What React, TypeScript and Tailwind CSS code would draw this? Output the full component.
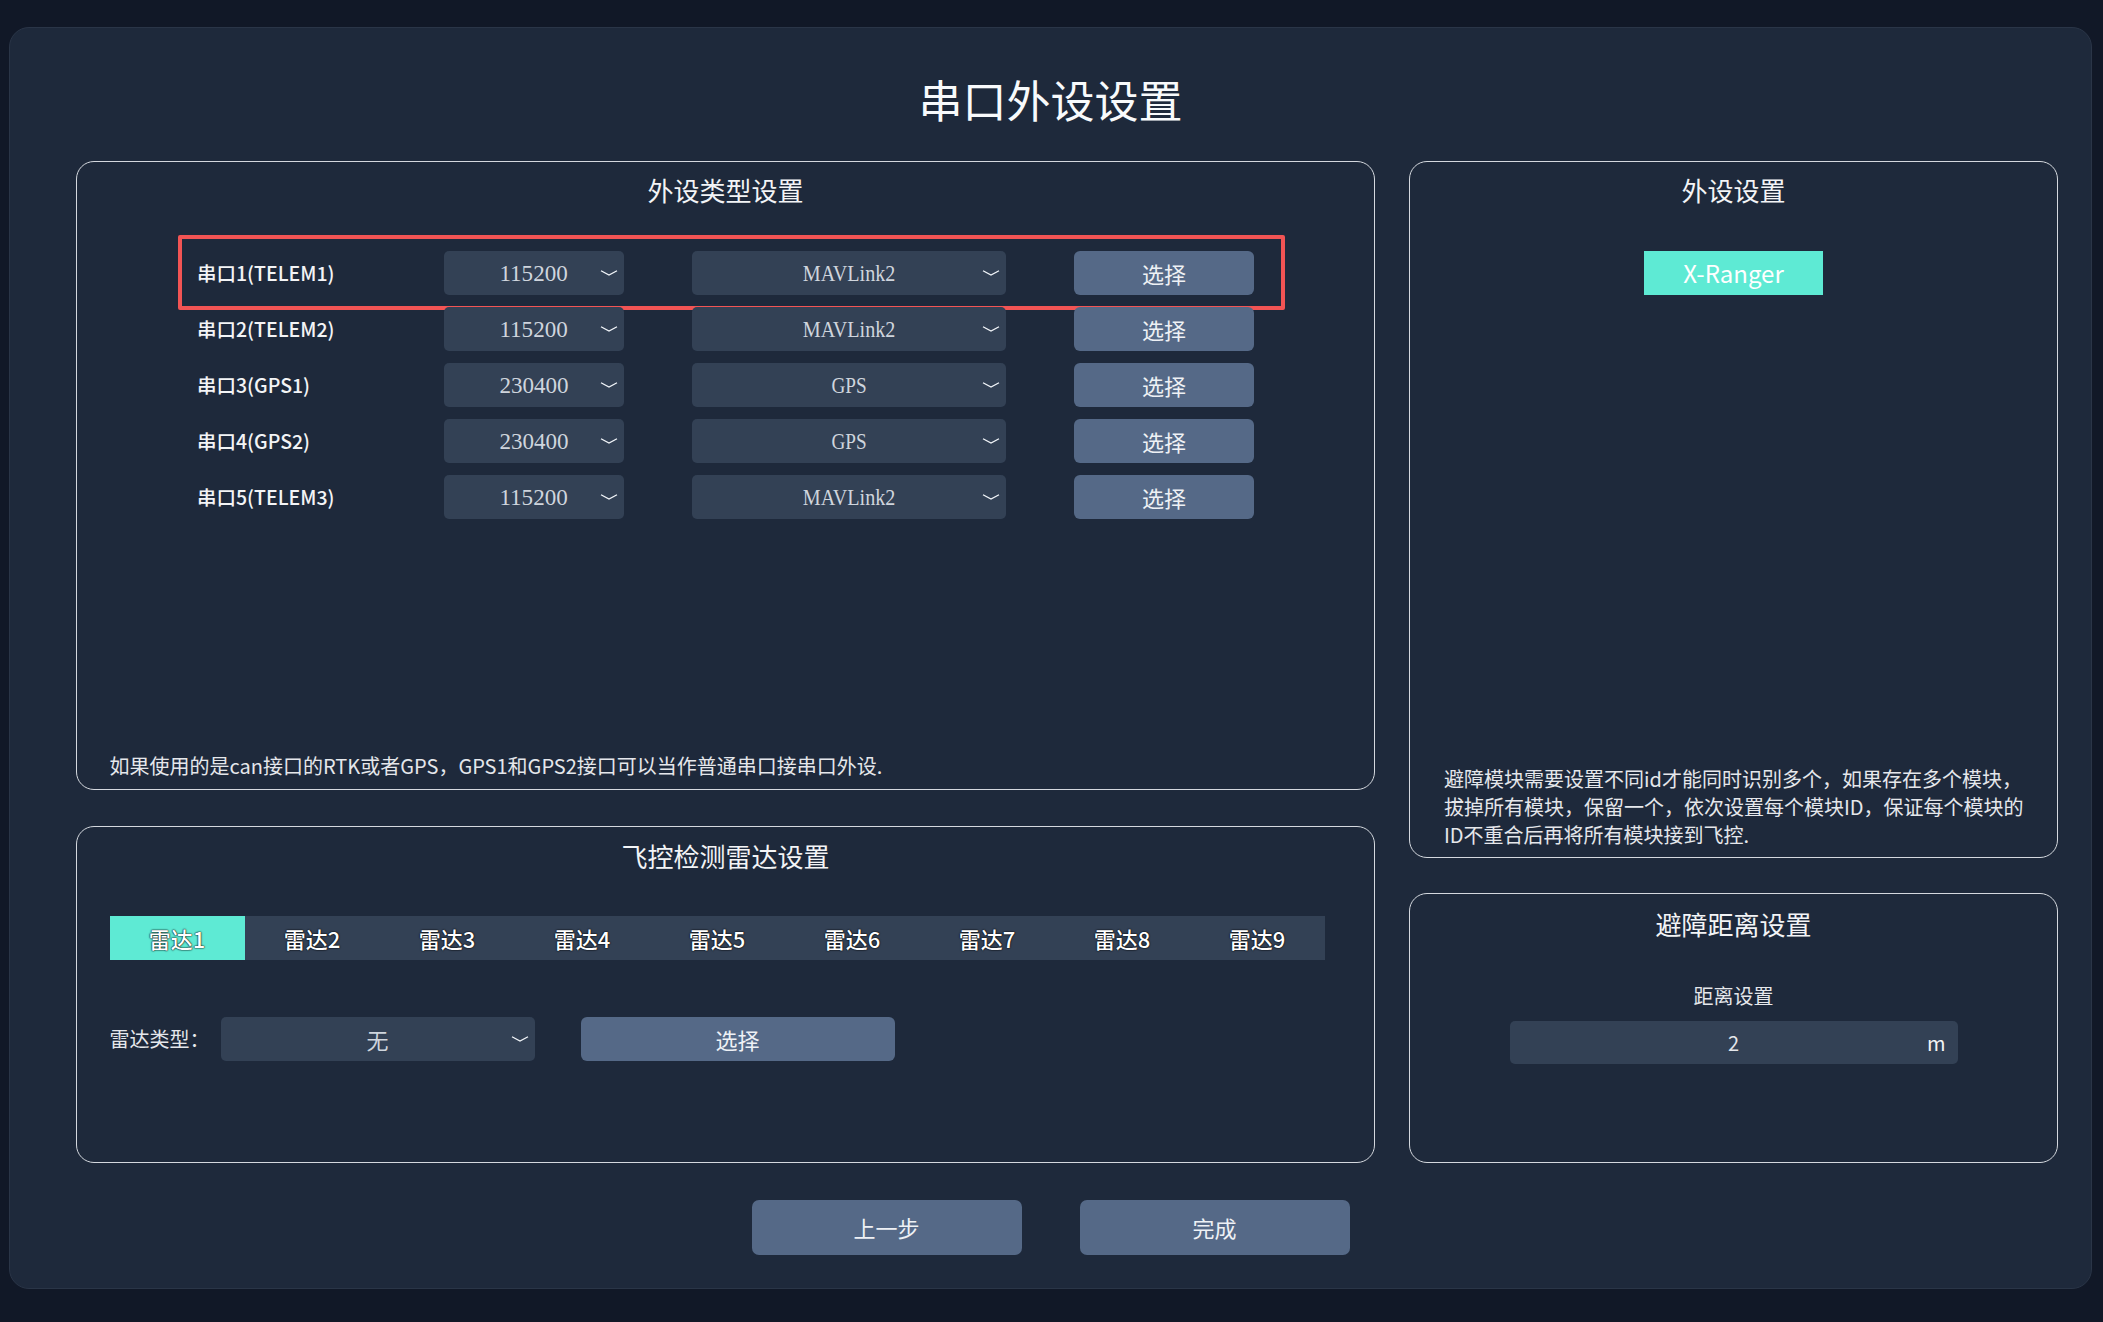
import React from 'react'

const ports = [
  { label: '串口1(TELEM1)', baud: '115200', proto: 'MAVLink2' },
  { label: '串口2(TELEM2)', baud: '115200', proto: 'MAVLink2' },
  { label: '串口3(GPS1)', baud: '230400', proto: 'GPS' },
  { label: '串口4(GPS2)', baud: '230400', proto: 'GPS' },
  { label: '串口5(TELEM3)', baud: '115200', proto: 'MAVLink2' }
]

const radars = ['雷达1', '雷达2', '雷达3', '雷达4', '雷达5', '雷达6', '雷达7', '雷达8', '雷达9']

// serif values are squeezed a bit so they look like the narrow fixed-width font of the original
const squeeze: Record<string, string> = {
  MAVLink2: 'scale-x-[0.84]',
  GPS: 'scale-x-[0.8]',
  '115200': 'scale-x-[0.96]',
  '230400': 'scale-x-[0.96]'
}

function Chevron() {
  return (
    <svg width="18" height="7" viewBox="0 0 18 7" className="absolute right-[6px] top-1/2 -translate-y-1/2">
      <polyline points="1,1.2 9,5.6 17,1.2" fill="none" stroke="#f1f5f9" strokeWidth="1.3" />
    </svg>
  )
}

function Select({ value, width, serif = true }: { value: string; width: string; serif?: boolean }) {
  return (
    <div className={`relative flex h-[44px] items-center justify-center rounded-[5px] bg-[#334155] ${width}`}>
      {serif ? (
        <span className={`inline-block font-['Liberation_Serif',serif] text-[24px] text-[#cfd5dd] ${squeeze[value] ?? ''}`}>
          {value}
        </span>
      ) : (
        <span className="text-[22px] text-[#cfd5dd]">{value}</span>
      )}
      <Chevron />
    </div>
  )
}

function PickButton({ width }: { width: string }) {
  return (
    <button className={`h-[44px] rounded-[6px] bg-[#556987] text-[22px] text-[#eef1f5] ${width}`}>选择</button>
  )
}

function Panel({ title, className = '', titlePad = 'pt-[10px]', children }: { title: string; className?: string; titlePad?: string; children?: React.ReactNode }) {
  return (
    <section className={`flex flex-col rounded-[18px] border-[1.5px] border-[#d4d8de] ${className}`}>
      <h2 className={`text-center text-[26px] leading-[36px] text-[#f3f4f6] ${titlePad}`}>{title}</h2>
      {children}
    </section>
  )
}

export default function App() {
  return (
    <div className="min-h-screen bg-[#111827] pt-[27px] pb-[33px] pl-[9px] pr-[11px] font-['Noto_Sans_CJK_SC','Noto_Sans',sans-serif] text-white">
      <div className="flex h-[1262px] flex-col rounded-[20px] border border-[#2a3547] bg-[#1e293b]">
        <h1 className="pt-[38px] text-center text-[44px] leading-[66px] text-[#f8fafc]">串口外设设置</h1>

        <div className="mt-[29px] flex gap-[34px] pl-[66px] pr-[33px]">
          {/* left column */}
          <div className="flex w-[1299px] flex-col gap-[36px]">
            <Panel title="外设类型设置" className="h-[629px]">
              <div className="mx-auto mt-[43px] flex w-[1057px] flex-col gap-[12px]">
                {ports.map((p, i) => (
                  <div key={p.label} className="relative flex h-[44px] items-center">
                    <div className="w-[247px] text-[19.5px] font-medium text-[#f3f4f6]">{p.label}</div>
                    <Select value={p.baud} width="w-[180px]" />
                    <div className="ml-[68px]">
                      <Select value={p.proto} width="w-[314px]" />
                    </div>
                    <div className="ml-[68px]">
                      <PickButton width="w-[180px]" />
                    </div>
                    {i === 0 && (
                      <div className="pointer-events-none absolute -top-[16px] -bottom-[15px] -left-[19px] -right-[31px] rounded-[2px] border-[4px] border-[#f25454]" />
                    )}
                  </div>
                ))}
              </div>
              <p className="mt-auto pb-[9px] pl-[32.5px] text-[20px] leading-[28px] text-[#e5e7eb]">
                如果使用的是can接口的RTK或者GPS，GPS1和GPS2接口可以当作普通串口接串口外设.
              </p>
            </Panel>

            <Panel title="飞控检测雷达设置" className="h-[337px]" titlePad="pt-[11px]">
              <div className="ml-[32.5px] mt-[42px] grid h-[44px] w-[1215px] grid-cols-9 bg-[#334155]">
                {radars.map((r, i) => (
                  <div
                    key={r}
                    className={`flex items-center justify-center text-[22px] font-medium text-white [text-shadow:0_0_2px_#000,0_0_1px_#000] ${
                      i === 0 ? 'bg-[#5eead4]' : ''
                    }`}
                  >
                    {r}
                  </div>
                ))}
              </div>
              <div className="ml-[32.5px] mt-[57px] flex items-center">
                <div className="w-[111px] text-[20px] text-[#e5e7eb]">雷达类型：</div>
                <Select value="无" width="w-[314px]" serif={false} />
                <div className="ml-[46px]">
                  <PickButton width="w-[314px]" />
                </div>
              </div>
            </Panel>
          </div>

          {/* right column */}
          <div className="flex w-[649px] flex-col gap-[35px]">
            <Panel title="外设设置" className="h-[697px]">
              <div className="mt-[43px] flex h-[44px] w-[179px] items-center justify-center self-center bg-[#5eead4] text-[24px] text-white">
                X-Ranger
              </div>
              <p className="mt-auto pb-[8px] pl-[34px] pr-[22px] text-[20px] leading-[28px] text-[#e5e7eb]">
                避障模块需要设置不同id才能同时识别多个，如果存在多个模块，拔掉所有模块，保留一个，依次设置每个模块ID，保证每个模块的ID不重合后再将所有模块接到飞控.
              </p>
            </Panel>

            <Panel title="避障距离设置" className="h-[270px]" titlePad="pt-[12px]">
              <div className="mt-[40px] text-center text-[20px] leading-[27px] text-[#e5e7eb]">距离设置</div>
              <div className="relative mt-[12px] flex h-[43px] w-[448px] items-center justify-center self-center rounded-[5px] bg-[#334155]">
                <span className="text-[20px] text-[#e5e7eb]">2</span>
                <span className="absolute right-[12px] top-1/2 -translate-y-1/2 text-[20px] text-[#f3f4f6]">m</span>
              </div>
            </Panel>
          </div>
        </div>

        <div className="mt-[37px] flex justify-center gap-[58px]">
          <button className="h-[55px] w-[270px] rounded-[7px] bg-[#556987] text-[22px] text-[#eef1f5]">上一步</button>
          <button className="h-[55px] w-[270px] rounded-[7px] bg-[#556987] text-[22px] text-[#eef1f5]">完成</button>
        </div>
      </div>
    </div>
  )
}
